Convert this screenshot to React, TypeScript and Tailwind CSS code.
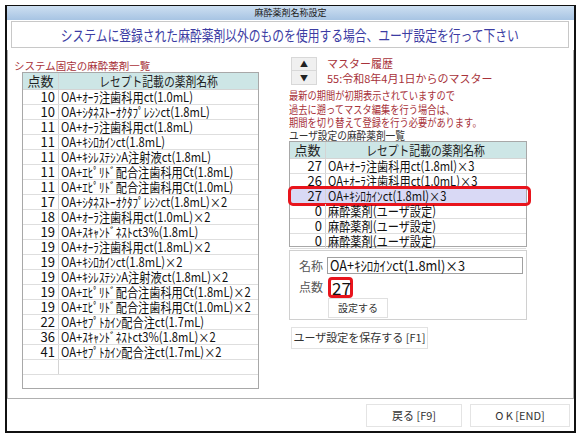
import React from "react";

const systemRows: [number, string][] = [
  [10, "OA+ｵｰﾗ注歯科用ct(1.0mL)"],
  [10, "OA+ｼﾀﾈｽﾄｰｵｸﾀﾌﾟﾚｼﾝct(1.8mL)"],
  [11, "OA+ｵｰﾗ注歯科用ct(1.8mL)"],
  [11, "OA+ｷｼﾛｶｲﾝct(1.8mL)"],
  [11, "OA+ｷｼﾚｽﾃｼﾝA注射液ct(1.8mL)"],
  [11, "OA+ｴﾋﾟﾘﾄﾞ配合注歯科用Ct(1.8mL)"],
  [11, "OA+ｴﾋﾟﾘﾄﾞ配合注歯科用Ct(1.0mL)"],
  [17, "OA+ｼﾀﾈｽﾄｰｵｸﾀﾌﾟﾚｼﾝct(1.8mL)×2"],
  [18, "OA+ｵｰﾗ注歯科用ct(1.0mL)×2"],
  [19, "OA+ｽｷｬﾝﾄﾞﾈｽﾄct3%(1.8mL)"],
  [19, "OA+ｵｰﾗ注歯科用ct(1.8mL)×2"],
  [19, "OA+ｷｼﾛｶｲﾝct(1.8mL)×2"],
  [19, "OA+ｷｼﾚｽﾃｼﾝA注射液ct(1.8mL)×2"],
  [19, "OA+ｴﾋﾟﾘﾄﾞ配合注歯科用Ct(1.8mL)×2"],
  [19, "OA+ｴﾋﾟﾘﾄﾞ配合注歯科用Ct(1.0mL)×2"],
  [22, "OA+ｾﾌﾟﾄｶｲﾝ配合注ct(1.7mL)"],
  [36, "OA+ｽｷｬﾝﾄﾞﾈｽﾄct3%(1.8mL)×2"],
  [41, "OA+ｾﾌﾟﾄｶｲﾝ配合注ct(1.7mL)×2"],
];

const userRows: [number, string][] = [
  [27, "OA+ｵｰﾗ注歯科用ct(1.8ml)×3"],
  [26, "OA+ｵｰﾗ注歯科用ct(1.0mL)×3"],
  [27, "OA+ｷｼﾛｶｲﾝct(1.8ml)×3"],
  [0, "麻酔薬剤(ユーザ設定)"],
  [0, "麻酔薬剤(ユーザ設定)"],
  [0, "麻酔薬剤(ユーザ設定)"],
];

function TableHeader() {
  return (
    <div className="flex h-[17px] border-b border-[#d4d4d4] bg-[#cde6e6] text-[13px] leading-[16px] text-[#222]">
      <div className="w-[36px] shrink-0 border-r border-[#d4d4d4] text-center">点数</div>
      <div className="flex-1 text-center">
        <span className="inline-block scale-x-[0.83]">レセプト記載の薬剤名称</span>
      </div>
    </div>
  );
}

function Row({ points, name, selected }: { points: number | ""; name: string; selected?: boolean }) {
  return (
    <div
      className={`relative flex h-[15px] border-b border-[#dedede] text-[13px] leading-[14px] text-[#111] ${
        selected ? "bg-[#d9d9f5]" : ""
      }`}
    >
      <div className="w-[36px] shrink-0 border-r border-[#d4d4d4] pr-[3px] text-right">{points}</div>
      <div className="min-w-0 flex-1 whitespace-nowrap pl-[2px]">
        <span className="inline-block origin-left scale-x-[0.86]">{name}</span>
      </div>
      {selected ? (
        <div className="pointer-events-none absolute -top-[3px] -left-[2px] h-[20px] w-[243px] rounded-[5px] border-[3px] border-[#e8141c]" />
      ) : null}
    </div>
  );
}

export default function App() {
  return (
    <div className="h-[439px] w-[582px] bg-white pt-[5px] pl-[5px] font-['Noto_Sans_CJK_JP',sans-serif]">
      <div className="flex h-[428px] w-[571px] flex-col border-t border-r-2 border-b-2 border-l-2 border-[#111]">
        <div className="h-[14px] bg-gradient-to-b from-[#cddff1] to-[#a7c4e3] text-center text-[9px] leading-[14px] text-[#222]">
          麻酔薬剤名称設定
        </div>

        <div className="mt-[1px] mr-[5px] ml-[4px] flex h-[27px] items-center justify-center border border-[#c8c8c8]">
          <span className="inline-block origin-center scale-x-[0.785] whitespace-nowrap text-[15px] leading-[20px] text-[#3c3ca3]">
            システムに登録された麻酔薬剤以外のものを使用する場合、ユーザ設定を行って下さい
          </span>
        </div>

        <div className="mt-[2px] flex h-[349px] border-r border-b border-l border-[#b0b0b0]">
          {/* left column */}
          <div className="w-[274px] shrink-0 pt-[10px] pl-[6px]">
            <div className="text-[10.5px] leading-[12px] text-[#a8323a]">システム固定の麻酔薬剤一覧</div>
            <div className="ml-[8px] h-[317px] w-[237px] overflow-hidden border border-[#a8a8a8]">
              <TableHeader />
              {systemRows.map(([p, n], i) => (
                <Row key={i} points={p} name={n} />
              ))}
              <Row points="" name="" />
            </div>
          </div>

          {/* right column */}
          <div className="flex-1 pt-[7px] pl-[7px]">
            <div className="flex h-[28px]">
              <div className="ml-[2px] flex w-[26px] flex-col">
                <button className="flex h-[14px] items-center justify-center border border-[#d8d8d8] bg-[#f0f0f0] text-[8px] leading-[8px] text-[#222]">
                  ▲
                </button>
                <button className="flex h-[14px] items-center justify-center border border-t-0 border-[#d8d8d8] bg-[#f0f0f0] text-[8px] leading-[8px] text-[#222]">
                  ▼
                </button>
              </div>
              <div className="ml-[10px] text-[11px] leading-[15px] text-[#a8323a]">
                <div className="mt-[-1px]">マスター履歴</div>
                <div>55:令和8年4月1日からのマスター</div>
              </div>
            </div>
            <div className="mt-[4px] origin-left scale-x-[0.84] whitespace-nowrap text-[11px] leading-[13.5px] text-[#a8323a]">
              <div>最新の期間が初期表示されていますので</div>
              <div>過去に遡ってマスタ編集を行う場合は、</div>
              <div>期間を切り替えて登録を行う必要があります。</div>
            </div>
            <div className="origin-left scale-x-[0.88] whitespace-nowrap text-[11px] leading-[11px] text-[#333]">
              ユーザ設定の麻酔薬剤一覧
            </div>
            <div className="h-[106px] w-[238px] border border-[#a8a8a8]">
              <TableHeader />
              {userRows.map(([p, n], i) => (
                <Row key={i} points={p} name={n} selected={i === 2} />
              ))}
            </div>

            <div className="mt-[3px] h-[70px] w-[238px] border border-[#d0d0d0] pt-[6px]">
              <div className="flex items-center">
                <div className="w-[37px] pr-[4px] text-right text-[12px] text-[#555]">名称</div>
                <div className="h-[17px] w-[196px] whitespace-nowrap border border-[#a0a0a0] pl-[2px] text-[14px] leading-[15px] text-[#111]">
                  <span className="inline-block origin-left scale-x-[0.91]">OA+ｷｼﾛｶｲﾝct(1.8ml)×3</span>
                </div>
              </div>
              <div className="mt-[2px] flex items-center">
                <div className="w-[37px] pr-[4px] text-right text-[12px] text-[#555]">点数</div>
                <div className="ml-[1px] flex h-[21px] w-[25px] items-center rounded-[4px] border-[3px] border-[#e8141c] pl-[1px] text-[17px] leading-[17px] text-[#111]">
                  27<span className="ml-[1px] inline-block h-[14px] w-[1px] bg-black" />
                </div>
              </div>
              <button className="ml-[38px] flex h-[20px] w-[60px] items-center justify-center border border-[#e0e0e0] bg-white text-[10px] text-[#333]">
                設定する
              </button>
            </div>

            <button className="mt-[7px] ml-[2px] flex h-[22px] w-[137px] items-center justify-center border border-[#e2e2e2] bg-white text-[11px] text-[#333]">
              ユーザ設定を保存する [F1]
            </button>
          </div>
        </div>

        <div className="flex flex-1 items-center justify-end gap-[8px] pr-[4px]">
          <button className="flex h-[23px] w-[96px] items-center justify-center border border-[#e4e4e4] bg-white text-[11px] text-[#333]">
            戻る [F9]
          </button>
          <button className="flex h-[23px] w-[100px] items-center justify-center border border-[#e4e4e4] bg-white text-[11px] text-[#333]">
            O K [END]
          </button>
        </div>
      </div>
    </div>
  );
}
